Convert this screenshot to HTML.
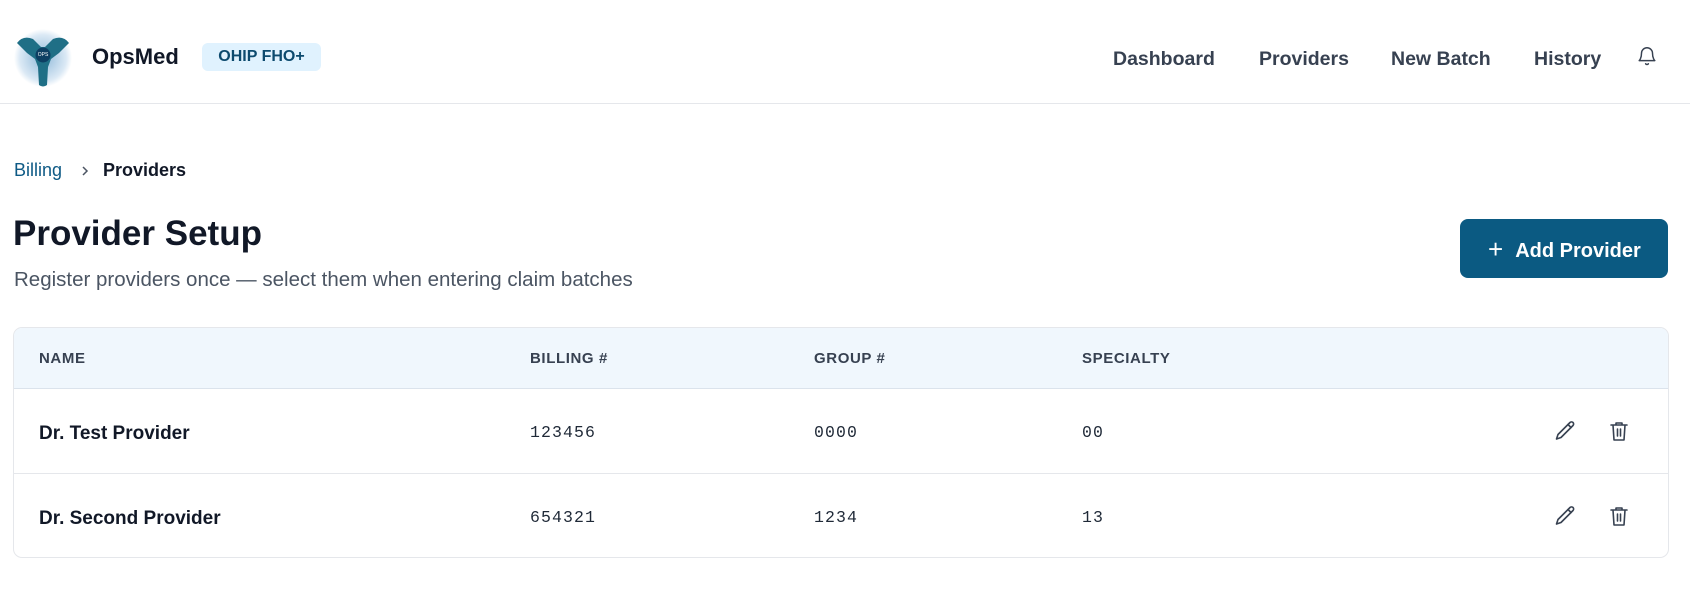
<!DOCTYPE html>
<html><head><meta charset="utf-8"><style>
*{margin:0;padding:0;box-sizing:border-box}
body{width:1690px;height:595px;background:#fff;font-family:"Liberation Sans",sans-serif;color:#111827;position:relative;overflow:hidden}
.abs{position:absolute}
.nav{position:absolute;top:48px;font-size:19.5px;color:#374151;font-weight:600}
.th{position:absolute;top:350px;font-size:15px;font-weight:700;color:#374151;letter-spacing:.6px}
.name{position:absolute;left:39px;font-size:19px;font-weight:600;color:#111827}
.mono{position:absolute;font-family:"Liberation Mono",monospace;font-size:16.5px;letter-spacing:1.1px;color:#1f2937}
</style></head><body>
<div class="abs" style="left:0;top:103px;width:1690px;height:1px;background:#e5e7eb"></div>
<svg class="abs" style="left:13px;top:27px" width="60" height="62" viewBox="0 0 60 62">
<defs><radialGradient id="g" cx=".5" cy=".5" r=".5"><stop offset="0" stop-color="#8fb9d9"/><stop offset=".8" stop-color="#dbe9f5"/><stop offset="1" stop-color="#fff"/></radialGradient></defs>
<circle cx="30" cy="31" r="29" fill="url(#g)"/>
<path d="M4 16 Q10 8 20 12 L28 20 L32 20 L40 12 Q50 8 56 16 L46 26 L38 32 L35 40 L34 58 Q30 61 26 58 L25 40 L22 32 L14 26Z" fill="#1f6f86"/>
<circle cx="30" cy="28" r="7.5" fill="#0d3f63"/>
<text x="30" y="29" font-size="5" fill="#fff" text-anchor="middle" font-family="Liberation Sans">OPS</text>
</svg>
<div class="abs" style="left:92px;top:44px;font-size:22px;font-weight:700;color:#111827">OpsMed</div>
<div class="abs" style="left:202px;top:43px;width:119px;height:28px;background:#e0f2fe;border-radius:6px;color:#0c4a6e;font-size:16px;font-weight:600;text-align:center;line-height:28px">OHIP FHO+</div>
<div class="nav" style="left:1113px">Dashboard</div>
<div class="nav" style="left:1259px">Providers</div>
<div class="nav" style="left:1391px">New Batch</div>
<div class="nav" style="left:1534px">History</div>
<svg class="abs" style="left:1636px;top:44px" width="22" height="24" viewBox="0 0 24 24" fill="none" stroke="#374151" stroke-width="1.6" stroke-linecap="round" stroke-linejoin="round"><path d="M6 9a6 6 0 0 1 12 0c0 6 2.5 8 2.5 8h-17S6 15 6 9"/><path d="M10.5 20.5a1.8 1.8 0 0 0 3 0"/></svg>
<div class="abs" style="left:14px;top:160px;font-size:18px;color:#0e5a85">Billing</div>
<svg class="abs" style="left:80px;top:165px" width="10" height="12" viewBox="0 0 10 12" fill="none" stroke="#4b5563" stroke-width="1.5"><path d="M3 2l4 4-4 4"/></svg>
<div class="abs" style="left:103px;top:160px;font-size:18px;font-weight:600;color:#111827">Providers</div>
<div class="abs" style="left:13px;top:214px;font-size:35px;font-weight:700;color:#111827">Provider Setup</div>
<div class="abs" style="left:14px;top:268px;font-size:20.5px;color:#4b5563">Register providers once — select them when entering claim batches</div>
<div class="abs" style="left:1460px;top:219px;width:208px;height:59px;background:#0b5a82;border-radius:8px;color:#fff;font-size:20px;font-weight:700;line-height:59px;padding-left:28px"><span style="font-weight:400;font-size:26px;position:relative;top:1px;margin-right:12px">+</span>Add Provider</div>
<div class="abs" style="left:13px;top:327px;width:1656px;height:231px;border:1px solid #e5e7eb;border-radius:9px;overflow:hidden">
<div style="height:61px;background:#f0f7fd;border-bottom:1px solid #dbe3ec"></div>
<div style="height:85px;border-bottom:1px solid #e5e7eb"></div>
</div>
<div class="th" style="left:39px">NAME</div>
<div class="th" style="left:530px">BILLING #</div>
<div class="th" style="left:814px">GROUP #</div>
<div class="th" style="left:1082px">SPECIALTY</div>
<div class="name" style="top:423px">Dr. Test Provider</div>
<div class="mono" style="left:530px;top:423px">123456</div>
<div class="mono" style="left:814px;top:423px">0000</div>
<div class="mono" style="left:1082px;top:423px">00</div>
<div class="name" style="top:508px">Dr. Second Provider</div>
<div class="mono" style="left:530px;top:508px">654321</div>
<div class="mono" style="left:814px;top:508px">1234</div>
<div class="mono" style="left:1082px;top:508px">13</div>
<svg class="abs" style="left:1553px;top:419px" width="24" height="24" viewBox="0 0 24 24" fill="none" stroke="#374151" stroke-width="1.6" stroke-linecap="round" stroke-linejoin="round"><path d="M17 3.5a2 2 0 0 1 3 3L8 18.5l-4.5 1.5 1.5-4.5z"/><path d="M15 5.5l3 3"/></svg>
<svg class="abs" style="left:1607px;top:419px" width="24" height="24" viewBox="0 0 24 24" fill="none" stroke="#374151" stroke-width="1.6" stroke-linecap="round" stroke-linejoin="round"><path d="M4 6h16M9 6V4h6v2M6 6l1 15h10l1-15M10.5 10v7M13.5 10v7"/></svg>
<svg class="abs" style="left:1553px;top:504px" width="24" height="24" viewBox="0 0 24 24" fill="none" stroke="#374151" stroke-width="1.6" stroke-linecap="round" stroke-linejoin="round"><path d="M17 3.5a2 2 0 0 1 3 3L8 18.5l-4.5 1.5 1.5-4.5z"/><path d="M15 5.5l3 3"/></svg>
<svg class="abs" style="left:1607px;top:504px" width="24" height="24" viewBox="0 0 24 24" fill="none" stroke="#374151" stroke-width="1.6" stroke-linecap="round" stroke-linejoin="round"><path d="M4 6h16M9 6V4h6v2M6 6l1 15h10l1-15M10.5 10v7M13.5 10v7"/></svg>
</body></html>
